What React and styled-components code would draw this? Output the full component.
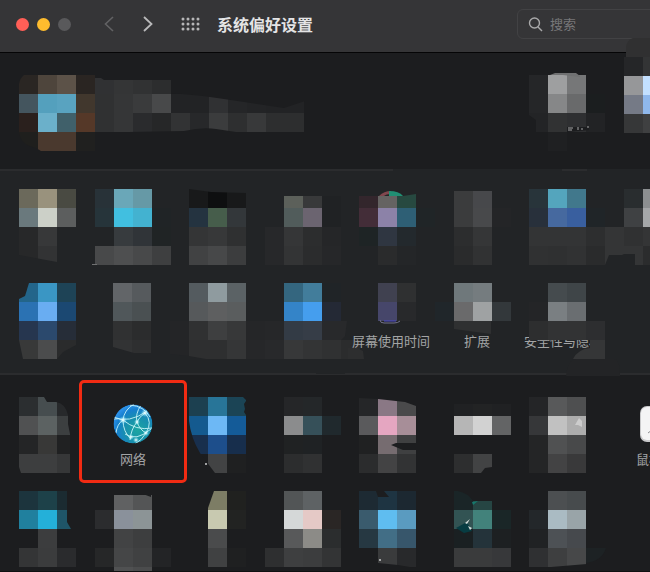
import React from "react";
import styled, { createGlobalStyle } from "styled-components";

const DARK = "#1c1d1f";
const MID = "#222426";
const CELL = 19;

const GlobalStyle = createGlobalStyle`
  * { box-sizing: border-box; }
  body {
    margin: 0;
    background: ${DARK};
    font-family: "Noto Sans CJK SC", "Liberation Sans", sans-serif;
  }
  button {
    margin: 0;
    padding: 0;
    border: 0;
    background: none;
    color: inherit;
    font: inherit;
  }
`;

const Window = styled.main`
  display: flex;
  flex-direction: column;
  height: 100vh;
  overflow: hidden;
  border-bottom: 1px solid #0f1011;
`;

const Toolbar = styled.header`
  display: flex;
  flex: none;
  align-items: center;
  height: 53px;
  padding: 0 0 4px 16px;
  background: #353537;
  border-bottom: 1px solid #050506;
`;

const Lights = styled.div`
  display: flex;
  gap: 8px;
`;

const Light = styled.button`
  width: 13px;
  height: 13px;
  border-radius: 50%;
  background: ${(p) => p.$color};
`;

const ToolButton = styled.button`
  display: flex;
  align-items: center;
  justify-content: center;
  width: 20px;
  height: 20px;
  margin-left: ${(p) => p.$gap}px;
  color: ${(p) => p.$color};
`;

const Title = styled.h1`
  margin: 0 0 0 16px;
  color: #e4e4e5;
  font-size: 16px;
  font-weight: 700;
  line-height: 24px;
  white-space: nowrap;
`;

const SearchBox = styled.label`
  display: flex;
  flex: none;
  align-items: center;
  gap: 7px;
  width: 160px;
  height: 30px;
  margin: 0 -27px 0 auto;
  padding: 0 10px;
  border: 1px solid #424244;
  border-radius: 6px;
  color: #a9a9aa;
`;

const SearchInput = styled.input`
  flex: 1;
  min-width: 0;
  padding: 0;
  border: 0;
  outline: 0;
  background: none;
  color: #dddddd;
  font: inherit;
  font-size: 13px;
  line-height: 20px;
  &::placeholder { color: #777779; opacity: 1; }
`;

const Pane = styled.section`
  display: grid;
  flex: none;
  grid-template-columns: repeat(8, 86px);
  grid-auto-rows: 85px;
  row-gap: 9px;
  padding: ${(p) => p.$top}px 0 ${(p) => p.$bottom}px 4px;
  background: ${(p) => p.$bg};
  border-top: ${(p) => (p.$line ? "2px solid #2b2c2e" : "0")};
`;

const LastPane = styled(Pane)`
  flex: 1;
  min-height: 0;
`;

const TileButton = styled.button`
  position: relative;
  display: flex;
  flex-direction: column;
  align-items: center;
  gap: 4px;
  grid-column: span ${(p) => p.$span || 1};
`;

const IconSlot = styled.span`
  display: flex;
  align-items: center;
  justify-content: center;
  height: 46px;
`;

const Label = styled.span`
  color: #a3a4a5;
  font-size: 13px;
  line-height: 16px;
  white-space: nowrap;
`;

const Cover = styled.svg`
  position: absolute;
  top: 0;
  left: 0;
  width: 100%;
  height: 100%;
  overflow: visible;
  pointer-events: none;
`;

const Highlight = styled.span`
  position: absolute;
  inset: -21px -11px 3px;
  border: 3px solid #f12b13;
  border-radius: 5px;
`;

function Mosaic({ x, y = 0, rows, top = 0, marks = [] }) {
  return (
    <Cover aria-hidden="true">
      <g shapeRendering="crispEdges">
        {rows.flatMap((row, r) =>
          row.split(" ").map((c, i) =>
            c === "-" ? null : (
              <rect
                key={`${r}-${i}`}
                x={x + i * CELL}
                y={y + r * CELL + (r === 0 ? top : 0)}
                width={CELL}
                height={CELL - (r === 0 ? top : 0)}
                fill={`#${c}`}
              />
            )
          )
        )}
      </g>
      {marks.map(([fill, d, stroke], i) => (
        <path key={i} d={d} fill={fill} stroke={stroke || "none"} />
      ))}
    </Cover>
  );
}

function Tile({ item }) {
  return (
    <TileButton type="button" $span={item.span} aria-label={item.label || "偏好设置项"}>
      <IconSlot>{item.icon}</IconSlot>
      {item.label && <Label>{item.label}</Label>}
      {item.rows && <Mosaic {...item} />}
      {item.highlight && <Highlight />}
    </TileButton>
  );
}

function NetworkIcon() {
  return (
    <svg width="40" height="40" viewBox="0 0 40 40" aria-hidden="true">
      <defs>
        <radialGradient id="globe" cx="62%" cy="66%" r="66%">
          <stop offset="0" stopColor="#1ba6a1" />
          <stop offset="0.5" stopColor="#188fae" />
          <stop offset="0.82" stopColor="#167fce" />
          <stop offset="1" stopColor="#2a8fe6" />
        </radialGradient>
        <radialGradient id="node">
          <stop offset="0" stopColor="#ffffff" />
          <stop offset="1" stopColor="#8ff4ff" stopOpacity="0" />
        </radialGradient>
        <clipPath id="disc"><circle cx="20" cy="20" r="19.5" /></clipPath>
      </defs>
      <g clipPath="url(#disc)">
        <circle cx="20" cy="20" r="19.5" fill="url(#globe)" />
        <g fill="none" stroke="#c8f5f8" strokeWidth="0.9">
          <path d="M0 13Q16 20 34 7" />
          <path d="M1 15Q5 14 10 16Q23 27 39 24" />
          <path d="M21 0Q11 6 10 16Q10 28 18 35" />
          <path d="M17 1Q31 2 37 13" />
          <path d="M28 1Q22 10 24 18Q27 26 33 29" />
          <path d="M24 18Q18 25 17 36" />
          <path d="M32 9Q40 18 33 29Q29 36 22 40" />
          <path d="M10 16Q4 20 3 29" />
          <path d="M12 30Q23 38 38 25" />
          <path d="M32 9Q26 13 24 18" />
        </g>
        <g fill="url(#node)">
          <circle cx="10" cy="16" r="4" />
          <circle cx="32" cy="9" r="4" />
          <circle cx="24" cy="18" r="3" />
          <circle cx="33" cy="29" r="3" />
          <circle cx="18" cy="33" r="3" />
          <circle cx="23" cy="36" r="3" />
        </g>
      </g>
    </svg>
  );
}

function MouseIcon() {
  return (
    <svg width="19" height="36" viewBox="0 0 19 36" aria-hidden="true">
      <rect width="19" height="36" rx="7" fill="#c9c9cb" />
      <rect x="1" y="1" width="17" height="33" rx="6" fill="#f4f4f5" />
      <path d="M8 27q2-3 4 0" stroke="#8c8c90" fill="none" />
    </svg>
  );
}

const accountItems = [
  {
    span: 6, x: 15,
    rows: [
      "2a2623 4e453c 5c5248 2a2522",
      "44555e 54a0bd 59a3c0 41372d 303132 353637 3a3b3c 48494a 222325 222325 303133 252628 232426 222325 222325",
      "2a201d 6bb0ca 40606a 553828 303132 353637 2a2b2d 262728 323334 27282a 3b3c3d 2e2f30 38393a 2d2e2f 2d2e2f",
      "1f1f1d 4a392e 4a392e 20201f",
    ],
    marks: [
      ["#303133", "M91 5V3h6l3 2h10v14H91z"],
      ["#343536", "M110 5h19v14h-19z"],
      ["#313233", "M129 5h19v14h-19z"],
      ["#2c2d2e", "M148 5h19v14h-19z"],
      [DARK, "M167 18h134v8l-21 7-60-9-21-3z"],
      [DARK, "M15 0h5q-4 3-5 9zM15 58q2 12 17 15l5 3H15z"],
      [DARK, "M123 58l2-1 55-1q18-4 32-2l20 3v2H123z"],
    ],
  },
  {
    x: 9,
    rows: ["252628 9e9fa0 767778", "252628 868788 696a6b 1b1e1f", "232426 313233 2e2f31 222325", "- 1f2022"],
    marks: [
      ["#707172", "M30 0l5-2h21l4 3v1l-17-2z"],
      [DARK, "M9 40l7 5v13H9zM47 52h22v3l-10 1-12 1z"],
      ["none", "M48 53h5M48 55h4M58 52v3M62 53v2M67 52h2", "#a5a6a7"],
    ],
  },
  {
    x: 18, y: -18,
    rows: ["252628 333435", "969799 c3e0ff", "757a86 8fb8ec", "363738 3f4041"],
    marks: [["#303031", "M20-18v-10q1-7 7-9h20v19z"]],
  },
];

const personalItems = [
  {
    x: 15,
    rows: ["6b695b 99927d 494a42", "6a797d ccd0c8 5c5e5e", "272829 373839", "272829 323334"],
    marks: [[MID, "M15 66l38 7v4H15z"]],
  },
  {
    x: 5,
    rows: ["283238 6aa7b8 6699a6", "26343a 41bfe0 43b2d0 202426", "- 373b3e 303438 202425", "48494a 4e4f50 48494a 3e3f40"],
    marks: [["#707172", "M2 75h5v1H2z"]],
  },
  {
    x: 13,
    rows: ["18191a 0e0f10 18191a", "243340 465d4b 33373a", "343536 373839 2f3031", "414243 474849 3c3d3e"],
    marks: [[MID, "M13 0h57v4l-35-1-22-3z"]],
  },
  {
    x: 3, top: 7,
    rows: ["- 5c605a 38393a 202224", "- 515c5b 6b6470 202224", "27282a 353637 2c2d2e 252628", "27282a 333435 2b2c2d 262729"],
  },
  {
    x: 11, top: 7,
    rows: ["33262c 656362 274940", "432d38 8c82a8 2e5f75 202527", "1e2425 2f3641 23292d", "- 2a2b2c 242628"],
    marks: [
      ["#80474e", "M31 7q5-5 12-5v3q-5 0-7 2z"],
      ["#219074", "M41 2q10 0 14 5H41z"],
      ["#274940", "M55 7l13-2v2z"],
    ],
  },
  {
    x: 20, top: 2,
    rows: ["3b3c3d 47484b", "3b3c3d 48494b 242527", "2c2d2e 353637", "2a2b2c 313233"],
    marks: [[MID, "M-41-20H128v2H-41zM153-20h63v2h-63z"]],
  },
  {
    x: 9,
    rows: ["28343a 54a5bd 41788c", "28303b 46699f 395f9f 202528", "333435 333435 333435 2d2e2f", "303132 2f3031 313233 2a2b2c"],
  },
  {
    x: -1,
    rows: ["- 292d2f 8c8f91", "- 3f4143 a5a7a9", "343536 303132 343536", "343536 343536 2b2c2d"],
    marks: [[MID, "M-1 76l4-10h13l2-1h11v11z"]],
  },
  {
    x: 15,
    rows: ["23658a 3a96c4 1e4356", "2b72b3 69adf2 1b4872", "26364f 2b496d 262d38", "383939 4b4c4d 2a2b2c"],
    marks: [
      [MID, "M15 0h10l-4 13-6 3z"],
      [MID, "M15 57l4 19h-4zM53 76l6-7 13-7v14z"],
    ],
  },
  {
    x: 23,
    rows: ["626568 565a5d", "50575a 4a5052", "303132 2b2c2d", "323334 2e2f30"],
    marks: [[MID, "M23 64l21 6h17v7H23z"]],
  },
  {
    x: -6,
    rows: ["- 545b5f 8f9b9f 5b6265", "- 56595b 5e5f60 5a5d5e", "242527 303132 3e3f40 373839", "242527 2e2f30 2e2f30 353637"],
    marks: [[MID, "M-6 71l19 2 17 3H-6z"]],
  },
  {
    x: -16,
    rows: ["- - 34667f 427d9b 202427", "- - 3484c8 459eee 242935", "252628 262729 333b45 363d47 28292b", "262729 28292b 373839 333435 303132 2b2c2d"],
    marks: [[MID, "M54-2h0zM54 91h29v-3H54z"], ["#28292b", "M79 38h6l-2 15-4 4z"]],
  },
  {
    label: "屏幕使用时间", x: 30,
    rows: ["404150 2f3031", "46466a 28292b"],
    marks: [
      ["none", "M32 37q0 3 4 3h10q4 0 6-2", "#73738c"],
      ["none", "M36 38h12", "#4b48c8"],
      ["#2d2e2f", "M0 65h9l6 3 1 8H0z"],
    ],
  },
  {
    label: "扩展", x: 1,
    rows: ["- 6f787b 757c7f", "20262a 6a6a6b 9fa2a3 33383b"],
    marks: [["#2f3031", "M20 38h37v13l-37-5z"]],
  },
  {
    label: "安全性与隐私", x: 9,
    rows: ["- 454b4e 3f4548", "242527 7a7f82 6a6e71", "2d2e2f 323334 323334 2d2e30"],
    marks: [
      ["#353637", "M53 76q5-10 17-11v-8h15v19z"],
      ["#232426", "M46 93q2-17 10-17h38q6 0 6 17z"],
    ],
  },
];

const hardwareItems = [
  {
    x: 15, y: -4,
    rows: ["2b2e30 464d4f 27292b", "505152 5c6262 3c3f40", "242526 383837 202122", "3d3e3f 3d3e3f 363738"],
    marks: [[DARK, "M40-4l3 5h9q9 1 12 13v9l2 10v39h7V-4zM15 66l2 6h-2z"]],
  },
  { label: "网络", icon: <NetworkIcon />, highlight: true },
  {
    x: 13, y: -4,
    rows: ["1c4050 287598 1b4455", "145a8f 6db8f5 145b98", "182f4d 1d4e8b 172e4c", "- 424344 1f2021"],
    marks: [
      [DARK, "M13 20q2 17 11 32l15 20H13zM70-4h-3l3 3zM70 0l-2 3 1 5-1 3 2 3z"],
      ["#a0a1a2", "M29 62h2v2h-2z"],
    ],
  },
  {
    x: 22, y: -4,
    rows: ["252628 242729", "8b8c8d 365059 20292d", "202223 1f2224", "2c2d2e 303132"],
  },
  {
    x: 11, y: -4,
    rows: ["252628 8a7885 4a4a4b", "5a5a5c e5a6c1 a78e98", "202122 766c70 3f4041", "2b2c2d 434344 323334"],
    marks: [[DARK, "M11-4h57v9l-11-4-27-3-19-1zM43 44l5-2h20v7H55z"]],
  },
  {
    x: 20, y: -4, top: 7,
    rows: ["202123 222324 202123", "b6b6b6 d2d2d2 636465", "-", "2d2e2f 424344"],
    marks: [[DARK, "M47 72l4-5 7-1v7H47z"]],
  },
  {
    x: 9, y: -4,
    rows: ["242527 58595a 4e4f50", "363739 c1c1c1 adadad", "242526 505152 48494a", "242526 434344 39393a"],
    marks: [["#cccccc", "M55 24l4-7 3 3v6l-4-2z"]],
  },
  { label: "鼠标", icon: <MouseIcon /> },
  {
    x: 15, y: -4,
    rows: ["1c343d 1d4149 1b2b31", "20809e 24b0d9 1f5568", "- 3c3d3e", "343536 3b3c3d 2a2b2d"],
    marks: [[DARK, "M63-4v31l4 7h6V-4z"]],
  },
  {
    x: 5, y: -4, top: 4,
    rows: ["- 606162 545556", "2b2c2e 8a919b 8c9496", "- 424344 3d3e3f", "262728 454647 404142 232426", "- 505152 4b4c4d"],
    marks: [[DARK, "M53-1l8 3v-3z"]],
  },
  {
    x: 32, y: -4,
    rows: ["7d7d65 20211f", "c8c9b0 222322", "4a4b4c", "404142 1f2021"],
    marks: [[DARK, "M32-4h6l-6 17z"]],
  },
  {
    x: 3, y: -4,
    rows: ["- 525556 5e6264", "- d5d8d8 e5c9c6 2a2625", "- 58595a 8c8b87 2b2d2e", "2e2f30 3e3f40 3c3d3e 333435"],
  },
  {
    x: 11, y: -4,
    rows: ["1d2a33 1e3442 1c2831", "3a5b6d 5fbdf0 5a9bc0", "263842 426e86 37566b", "- 3a3b3c 28292b"],
    marks: [
      [DARK, "M28-4h8l5 6H30zM30 68l20 2 18 3H30z"],
      ["#a6a7a8", "M31 64h2v2h-2z"],
    ],
  },
  {
    x: 20, y: -4,
    rows: ["1a2527 264543", "325353 42827b 1a2627", "1a2022 24333a 1d2022", "3a3b3c 3a3b3c 37383a"],
    marks: [
      [DARK, "M24-4h34V6H39Q34-2 24-4z"],
      ["#16786c", "M38 7l6-1-5 4z"],
      ["#073c42", "M22 33l11-6 5 9-8 2z"],
      ["#d5dedb", "M31 28l5-4-3 5zM34 31l4 2-2 2z"],
    ],
  },
  {
    x: 9, y: -4,
    rows: ["- 4c4f51 474b4d", "23272a aabbc3 99a4a8", "202224 4d5155 46494d", "2f3032 3e3f40 474849"],
    marks: [["#1d2224", "M66 53h20q-4 13-20 15z"], [DARK, "M31 72l36-3v4H31z"]],
  },
];

function Tiles({ items }) {
  return items.map((item, i) => <Tile key={i} item={item} />);
}

export default function App() {
  const dots = [1, 6, 11, 16];
  return (
    <>
      <GlobalStyle />
      <Window>
        <Toolbar>
          <Lights>
            <Light type="button" aria-label="关闭" $color="#ff5f57" />
            <Light type="button" aria-label="最小化" $color="#febc2e" />
            <Light type="button" aria-label="缩放" $color="#59595b" />
          </Lights>
          <ToolButton type="button" aria-label="后退" $gap={28} $color="#626264">
            <svg width="10" height="16" viewBox="0 0 10 16" fill="none" stroke="currentColor" strokeWidth="1.6">
              <path d="M9 1L1.5 8L9 15" />
            </svg>
          </ToolButton>
          <ToolButton type="button" aria-label="前进" $gap={19} $color="#b9b9ba">
            <svg width="10" height="16" viewBox="0 0 10 16" fill="none" stroke="currentColor" strokeWidth="1.8">
              <path d="M1 1L8.5 8L1 15" />
            </svg>
          </ToolButton>
          <ToolButton type="button" aria-label="显示全部" $gap={23} $color="#b6b6b7">
            <svg width="20" height="14" viewBox="0 0 20 14" fill="currentColor">
              {[2, 7, 12].flatMap((y) => dots.map((x) => <circle key={`${x}-${y}`} cx={x + 1} cy={y} r="1.5" />))}
            </svg>
          </ToolButton>
          <Title>系统偏好设置</Title>
          <SearchBox>
            <svg width="15" height="15" viewBox="0 0 15 15" fill="none" stroke="currentColor" strokeWidth="1.4" aria-hidden="true">
              <circle cx="6.5" cy="6" r="5" />
              <path d="M10 10l4 4" />
            </svg>
            <SearchInput type="search" placeholder="搜索" aria-label="搜索" />
          </SearchBox>
        </Toolbar>
        <Pane $bg={DARK} $top={22} $bottom={9}><Tiles items={accountItems} /></Pane>
        <Pane $bg={MID} $top={18} $bottom={5} $line><Tiles items={personalItems} /></Pane>
        <LastPane $bg={DARK} $top={26} $bottom={0} $line><Tiles items={hardwareItems} /></LastPane>
      </Window>
    </>
  );
}
